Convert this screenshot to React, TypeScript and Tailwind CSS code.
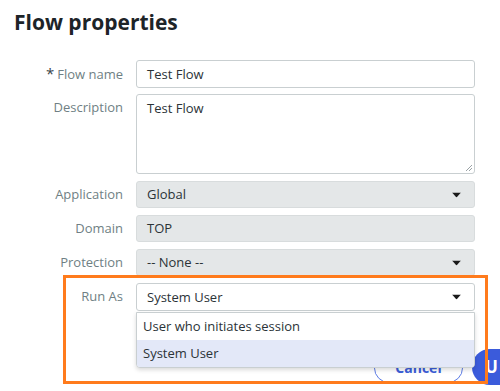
import React from "react";

function Caret() {
  return (
    <svg width="9" height="5" viewBox="0 0 9 5" className="absolute right-[13px] top-1/2 -translate-y-1/2">
      <path d="M0 0 H9 L4.5 5 Z" fill="#1a1a1a" />
    </svg>
  );
}

function Row({ label, children, required }: { label: string; children: React.ReactNode; required?: boolean }) {
  return (
    <div className="flex items-start">
      <div className="w-[123px] shrink-0 text-right text-[13px] text-[#6f7f84] leading-[27px] pr-0">
        {required && <span className="text-[#3a4448] mr-[3px] text-[15px]">*</span>}
        {label}
      </div>
      <div className="ml-[13px] w-[339px]">{children}</div>
    </div>
  );
}

export default function App() {
  const font = { fontFamily: '"Open Sans", "Noto Sans", sans-serif' };
  return (
    <div className="relative w-[500px] h-[391px] bg-white overflow-hidden" style={font}>
      <h1 className="pl-[14px] pt-[8px] text-[21px] leading-[28px] font-bold text-[#1d2428]">Flow properties</h1>

      <div className="mt-[24px] flex flex-col">
        <Row label="Flow name" required>
          <div className="h-[28px] border border-[#c9cfd1] rounded-[3px] px-[10px] text-[13px] leading-[26px] text-[#2b3337]">
            Test Flow
          </div>
        </Row>
        <div className="mt-[6px]">
          <Row label="Description">
            <div className="relative h-[80px] border border-[#c9cfd1] rounded-[3px] px-[10px] pt-[2px] text-[13px] leading-[22px] text-[#2b3337]">
              Test Flow
              <svg width="8" height="8" viewBox="0 0 8 8" className="absolute right-[1px] bottom-[1px]">
                <path d="M7 1 L1 7 M7 4 L4 7" stroke="#9aa2a5" strokeWidth="1" />
              </svg>
            </div>
          </Row>
        </div>
        <div className="mt-[7px]">
          <Row label="Application">
            <div className="relative h-[27px] bg-[#e4e7e8] border border-[#d8dcdd] rounded-[3px] px-[10px] text-[13px] leading-[25px] text-[#2b3337]">
              Global
              <Caret />
            </div>
          </Row>
        </div>
        <div className="mt-[7px]">
          <Row label="Domain">
            <div className="h-[27px] bg-[#e4e7e8] border border-[#d8dcdd] rounded-[3px] px-[10px] text-[13px] leading-[25px] text-[#2b3337]">
              TOP
            </div>
          </Row>
        </div>
        <div className="mt-[7px]">
          <Row label="Protection">
            <div className="relative h-[27px] bg-[#e4e7e8] border border-[#d8dcdd] rounded-[3px] px-[10px] text-[13px] leading-[25px] text-[#2b3337]">
              -- None --
              <Caret />
            </div>
          </Row>
        </div>
        <div className="mt-[7px]">
          <Row label="Run As">
            <div className="relative">
              <div className="relative h-[28px] bg-white border border-[#c9cfd1] rounded-[3px] px-[10px] text-[13px] leading-[26px] text-[#2b3337]">
                System User
                <Caret />
              </div>
              <div className="absolute z-10 left-0 right-0 top-[29px] bg-white border border-[#c9cfd1] rounded-b-[4px] shadow-[0_2px_4px_rgba(0,0,0,0.15)] overflow-hidden text-[13px] text-[#2b3337]">
                <div className="h-[27px] leading-[27px] px-[6px]">User who initiates session</div>
                <div className="h-[27px] leading-[27px] px-[6px] bg-[#e3e8f8]">System User</div>
              </div>
            </div>
          </Row>
        </div>
        <div className="mt-[42px] flex justify-end gap-[9px]">
          <div className="w-[89px] h-[30px] rounded-full border border-[#5b7be6] text-[#3c5ed8] font-bold text-[14px] leading-[28px] text-center">
            Cancel
          </div>
          <div className="w-[28px] h-[36px] -mt-[4px] rounded-l-full bg-[#3b5bdb] text-white font-bold text-[17px] leading-[36px] pl-[13px] overflow-hidden">
            U
          </div>
        </div>
      </div>

      <div className="absolute z-20 left-[63px] top-[275px] w-[425px] h-[109px] border-[3px] border-[#ff7b1c] pointer-events-none" />
    </div>
  );
}
